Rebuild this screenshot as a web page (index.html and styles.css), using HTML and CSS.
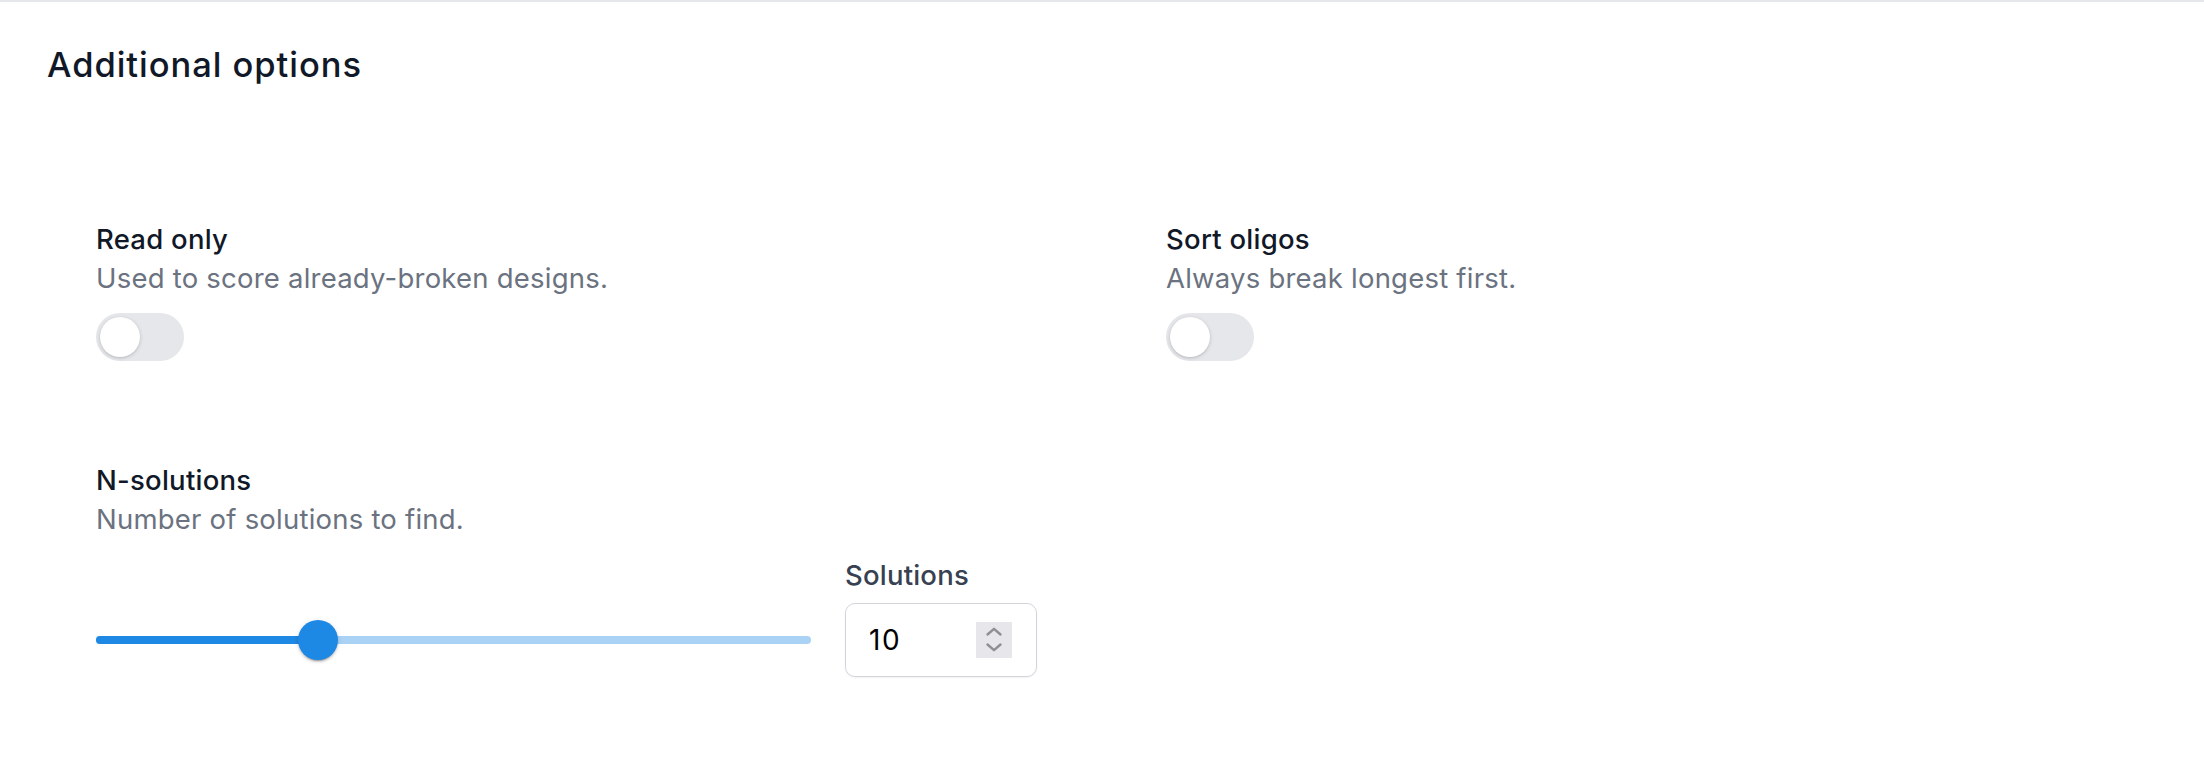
FILE: index.html
```html
<!DOCTYPE html>
<html lang="en">
<head>
<meta charset="utf-8">
<title>Additional options</title>
<link rel="stylesheet" href="styles.css">
</head>
<body>
<section class="panel">
  <h2 class="panel-title">Additional options</h2>
  <div class="options">
    <div class="option">
      <div class="option-label">Read only</div>
      <div class="option-desc">Used to score already-broken designs.</div>
      <div class="toggle"><span class="toggle-thumb"></span></div>
    </div>
    <div class="option">
      <div class="option-label">Sort oligos</div>
      <div class="option-desc">Always break longest first.</div>
      <div class="toggle"><span class="toggle-thumb"></span></div>
    </div>
    <div class="option option-wide">
      <div class="option-label">N-solutions</div>
      <div class="option-desc">Number of solutions to find.</div>
      <div class="slider-row">
        <div class="slider">
          <div class="slider-rail"></div>
          <div class="slider-track" style="width: 31%"></div>
          <div class="slider-thumb" style="left: 31%"></div>
        </div>
        <div class="field">
          <div class="field-label">Solutions</div>
          <div class="number-input">
            <span class="number-value">10</span>
            <span class="spinner">
              <svg width="36" height="36" viewBox="0 0 36 36" fill="none" stroke="#8e8e93" stroke-width="2.4" stroke-linecap="round" stroke-linejoin="round">
                <path d="M11.5 12.5 L18 6.8 L24.5 12.5"/>
                <path d="M11.5 22.5 L18 28.2 L24.5 22.5"/>
              </svg>
            </span>
          </div>
        </div>
      </div>
    </div>
  </div>
</section>
</body>
</html>
```

FILE: styles.css
```css
html, body {
  margin: 0;
  padding: 0;
  background: #ffffff;
}

body {
  font-family: Inter, "Noto Sans", "Liberation Sans", sans-serif;
  color: #111827;
  width: 2204px;
  height: 758px;
  overflow: hidden;
}

.panel {
  border-top: 2px solid #e5e7eb;
  padding: 41px 47px 0 47px;
}

.panel-title {
  margin: 0;
  font-size: 34.5px;
  line-height: 44.8px;
  letter-spacing: 0.95px;
  font-weight: 500;
  color: #111827;
}

.options {
  margin-top: 132px;
  margin-left: 49px;
  display: grid;
  grid-template-columns: 1070px 1fr;
  row-gap: 100px;
}

.option-wide {
  grid-column: 1 / -1;
}

.option-label {
  font-size: 27.5px;
  line-height: 39.2px;
  letter-spacing: 0.25px;
  font-weight: 500;
  color: #111827;
}

.option-desc {
  font-size: 27.5px;
  line-height: 39.2px;
  letter-spacing: 0.22px;
  color: #6b7280;
}

.toggle {
  margin-top: 15px;
  width: 88px;
  height: 48px;
  border-radius: 24px;
  background: #e5e7eb;
  position: relative;
}

.toggle-thumb {
  position: absolute;
  top: 4px;
  left: 4px;
  width: 40px;
  height: 40px;
  border-radius: 50%;
  background: #ffffff;
  box-shadow: 0 1px 4px rgba(0, 0, 0, 0.14), 0 1px 2px rgba(0, 0, 0, 0.08);
}

.slider-row {
  margin-top: 16px;
  display: flex;
  align-items: flex-end;
  gap: 34px;
}

.slider {
  position: relative;
  width: 715px;
  height: 74px;
}

.slider-rail,
.slider-track {
  position: absolute;
  left: 0;
  top: 33px;
  height: 8px;
  border-radius: 4px;
}

.slider-rail {
  width: 100%;
  background: #1e88e5;
  opacity: 0.38;
}

.slider-track {
  background: #1e88e5;
}

.slider-thumb {
  position: absolute;
  top: 17px;
  width: 40px;
  height: 40px;
  margin-left: -20px;
  border-radius: 50%;
  background: #1e88e5;
  box-shadow: 0 3px 1px -2px rgba(0, 0, 0, 0.2), 0 2px 2px 0 rgba(0, 0, 0, 0.14), 0 1px 5px 0 rgba(0, 0, 0, 0.12);
}

.field {
  display: flex;
  flex-direction: column;
}

.field-label {
  font-size: 27.5px;
  line-height: 39.2px;
  letter-spacing: 0.2px;
  font-weight: 500;
  color: #374151;
  margin-bottom: 8px;
}

.number-input {
  box-sizing: border-box;
  width: 192px;
  height: 74px;
  border: 1.5px solid #d1d5db;
  border-radius: 10px;
  box-shadow: 0 1px 2px rgba(0, 0, 0, 0.05);
  display: flex;
  align-items: center;
  justify-content: space-between;
  padding: 0 24px 0 23px;
}

.number-value {
  font-size: 28px;
  letter-spacing: 1.5px;
  color: #000000;
}

.spinner {
  display: flex;
  width: 36px;
  height: 36px;
  background: #e6e6eb;
}
```
